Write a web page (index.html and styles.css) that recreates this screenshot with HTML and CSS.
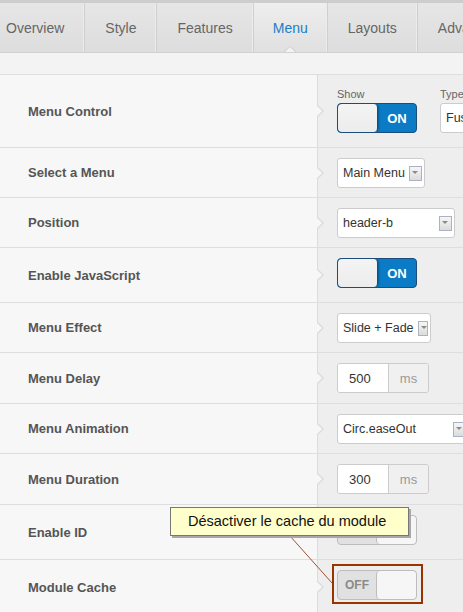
FILE: index.html
```html
<!DOCTYPE html>
<html lang="fr">
<head>
  <meta charset="UTF-8">
  <title>Menu - Options du module</title>
  <link rel="stylesheet" href="styles.css">
</head>
<body>

<div class="page">
  <div class="tabs">
    <ul class="tab-list">
      <li class="tab">Overview</li>
      <li class="tab">Style</li>
      <li class="tab">Features</li>
      <li class="tab active">Menu</li>
      <li class="tab">Layouts</li>
      <li class="tab">Advanced</li>
    </ul>
  </div>

  <div class="band"></div>

  <div class="rows">
    <div class="row">
      <div class="row-label">Menu Control</div>
      <div class="row-field">
        <div class="group">
          <span class="small-label">Show</span>
          <div class="toggle on"><span class="knob"></span><span class="state">ON</span></div>
        </div>
        <div class="group">
          <span class="small-label">Type</span>
          <div class="select type-select"><span class="value">Fusion</span><span class="arrow"></span></div>
        </div>
      </div>
    </div>

    <div class="row">
      <div class="row-label">Select a Menu</div>
      <div class="row-field">
        <div class="select menu-select"><span class="value">Main Menu</span><span class="arrow"></span></div>
      </div>
    </div>

    <div class="row">
      <div class="row-label">Position</div>
      <div class="row-field">
        <div class="select position-select"><span class="value">header-b</span><span class="arrow"></span></div>
      </div>
    </div>

    <div class="row">
      <div class="row-label">Enable JavaScript</div>
      <div class="row-field">
        <div class="toggle on"><span class="knob"></span><span class="state">ON</span></div>
      </div>
    </div>

    <div class="row">
      <div class="row-label">Menu Effect</div>
      <div class="row-field">
        <div class="select effect-select"><span class="value">Slide + Fade</span><span class="arrow"></span></div>
      </div>
    </div>

    <div class="row">
      <div class="row-label">Menu Delay</div>
      <div class="row-field">
        <div class="input-group"><span class="input">500</span><span class="addon">ms</span></div>
      </div>
    </div>

    <div class="row">
      <div class="row-label">Menu Animation</div>
      <div class="row-field">
        <div class="select anim-select"><span class="value">Circ.easeOut</span><span class="arrow"></span></div>
      </div>
    </div>

    <div class="row">
      <div class="row-label">Menu Duration</div>
      <div class="row-field">
        <div class="input-group"><span class="input">300</span><span class="addon">ms</span></div>
      </div>
    </div>

    <div class="row">
      <div class="row-label">Enable ID</div>
      <div class="row-field">
        <div class="toggle off"><span class="state">OFF</span><span class="knob"></span></div>
      </div>
    </div>

    <div class="row">
      <div class="row-label">Module Cache</div>
      <div class="row-field">
        <div class="toggle off"><span class="state">OFF</span><span class="knob"></span></div>
      </div>
    </div>
  </div>

  <!-- bulle d'aide pointant sur l'option du cache -->
  <svg class="callout-line" width="463" height="612">
    <line x1="290" y1="536" x2="332" y2="583" stroke="#a0522d" stroke-width="1"/>
  </svg>
  <div class="tooltip">Désactiver le cache du module</div>
  <div class="highlight"></div>
</div>

</body>
</html>
```

FILE: styles.css
```css
body {
  margin: 0;
  background: #f3f3f3;
  font-family: "Liberation Sans", Arial, sans-serif;
  overflow: hidden;
}

.page {
  position: relative;
  width: 463px;
  height: 612px;
  overflow: hidden;
}

/* barre d'onglets */
.tabs {
  border-top: 3px solid #cdcdcd;
  border-bottom: 1px solid #d2d2d2;
  background: linear-gradient(#e6e6e6, #dddddd);
  height: 49px;
  overflow: hidden;
}

.tab-list {
  display: flex;
  margin: 0 0 0 -14px;
  padding: 0;
  list-style: none;
  height: 100%;
}

.tab {
  position: relative;
  display: flex;
  align-items: center;
  padding: 0 20px;
  font-size: 14px;
  color: #666;
  white-space: nowrap;
  border-right: 1px solid #cfcfcf;
  box-shadow: inset -1px 0 0 #ececec;
}

.tab.active {
  padding: 0 19px;
  color: #1b7fc4;
  background: linear-gradient(#eeeeee, #e0e0e0);
}

/* petite fleche sous l'onglet actif */
.tab.active::before,
.tab.active::after {
  content: "";
  position: absolute;
  left: 50%;
  bottom: 0;
  width: 0;
  height: 0;
  border-style: solid;
  border-color: transparent;
}

.tab.active::before {
  margin-left: -7px;
  border-width: 0 7px 6px 7px;
  border-bottom-color: #d2d2d2;
}

.tab.active::after {
  margin-left: -6px;
  bottom: -1px;
  border-width: 0 6px 6px 6px;
  border-bottom-color: #f3f3f3;
}

.band {
  height: 21px;
}

/* lignes d'options */
.rows {
  border-top: 1px solid #dedede;
}

.row {
  display: grid;
  grid-template-columns: 317px 1fr;
  border-bottom: 1px solid #dedede;
  background: #f7f7f7;
}

.row-label {
  display: flex;
  align-items: center;
  padding-left: 28px;
  font-size: 13px;
  font-weight: bold;
  color: #555;
}

.row-field {
  position: relative;
  display: flex;
  align-items: flex-start;
  gap: 23px;
  padding: 10px 0 9px 19px;
  background: #eeeeee;
  border-left: 1px solid #dcdcdc;
}

.row-field::before,
.row-field::after {
  content: "";
  position: absolute;
  top: 50%;
  width: 0;
  height: 0;
  border-style: solid;
  border-color: transparent;
}

.row-field::before {
  left: 0;
  margin-top: -6px;
  border-width: 6px 0 6px 6px;
  border-left-color: #dcdcdc;
}

.row-field::after {
  left: -1px;
  margin-top: -5px;
  border-width: 5px 0 5px 5px;
  border-left-color: #f7f7f7;
}

.group {
  display: flex;
  flex-direction: column;
}

.small-label {
  font-size: 11px;
  line-height: 18px;
  color: #666;
}

/* interrupteurs ON / OFF */
.toggle {
  display: flex;
  box-sizing: border-box;
  width: 80px;
  height: 30px;
  margin-bottom: 5px;
  border-radius: 4px;
  overflow: hidden;
  font-size: 13px;
  font-weight: bold;
}

.toggle .state {
  flex: 1;
  display: flex;
  align-items: center;
  justify-content: center;
}

.toggle .knob {
  box-sizing: border-box;
  width: 40px;
  border-radius: 4px;
}

.toggle.on {
  background: #0a7bc4;
  border: 1px solid #1d4c7a;
  color: #fff;
}

.toggle.on .knob {
  background: linear-gradient(#f4f4f4, #ececec);
  border-right: 1px solid #1d4c7a;
  box-shadow: 1px 0 2px rgba(0, 0, 0, 0.25);
}

.toggle.off {
  background: #e1e1e1;
  border: 1px solid #bdbdbd;
  color: #8a8a8a;
  font-size: 12px;
}

.toggle.off .knob {
  background: #f6f6f6;
  border-left: 1px solid #bdbdbd;
}

/* listes deroulantes */
.select {
  display: flex;
  align-items: center;
  gap: 4px;
  box-sizing: border-box;
  height: 30px;
  padding: 0 2px 0 5px;
  background: #fff;
  border: 1px solid #cccccc;
  border-radius: 3px;
  font-size: 12.5px;
  color: #333;
  white-space: nowrap;
}

.select .value {
  flex: 1;
}

.select .arrow {
  position: relative;
  box-sizing: border-box;
  width: 13px;
  height: 15px;
  background: linear-gradient(#f6f6f6, #dcdcdc);
  border: 1px solid #a9b3c4;
}

.select .arrow::after {
  content: "";
  position: absolute;
  left: 2px;
  top: 4px;
  border-style: solid;
  border-width: 3px 3px 0 3px;
  border-color: #8a8a8a transparent transparent transparent;
}

.menu-select { width: 88px; }
.position-select { width: 118px; }
.effect-select { width: 94px; }
.anim-select { width: 132px; }
.type-select { width: 140px; }

/* champs numeriques */
.input-group {
  display: flex;
  box-sizing: border-box;
  height: 30px;
  margin-bottom: 1px;
  border: 1px solid #cccccc;
  border-radius: 3px;
  overflow: hidden;
  font-size: 13px;
}

.input-group .input {
  display: flex;
  align-items: center;
  width: 39px;
  padding-left: 11px;
  background: #fff;
  color: #333;
}

.input-group .addon {
  display: flex;
  align-items: center;
  justify-content: center;
  width: 39px;
  background: #f0f0f0;
  border-left: 1px solid #cccccc;
  color: #999;
}

/* bulle d'aide */
.callout-line {
  position: absolute;
  left: 0;
  top: 0;
  pointer-events: none;
}

.tooltip {
  position: absolute;
  left: 170px;
  top: 507px;
  box-sizing: border-box;
  width: 239px;
  height: 29px;
  padding-left: 17px;
  line-height: 27px;
  background: #ffffcc;
  border: 1px solid #777;
  box-shadow: 2px 2px 0 #a8a8a8;
  font-size: 14.5px;
  color: #111;
}

.highlight {
  position: absolute;
  left: 332px;
  top: 564px;
  box-sizing: border-box;
  width: 91px;
  height: 40px;
  border: 2px solid #993300;
}
```
